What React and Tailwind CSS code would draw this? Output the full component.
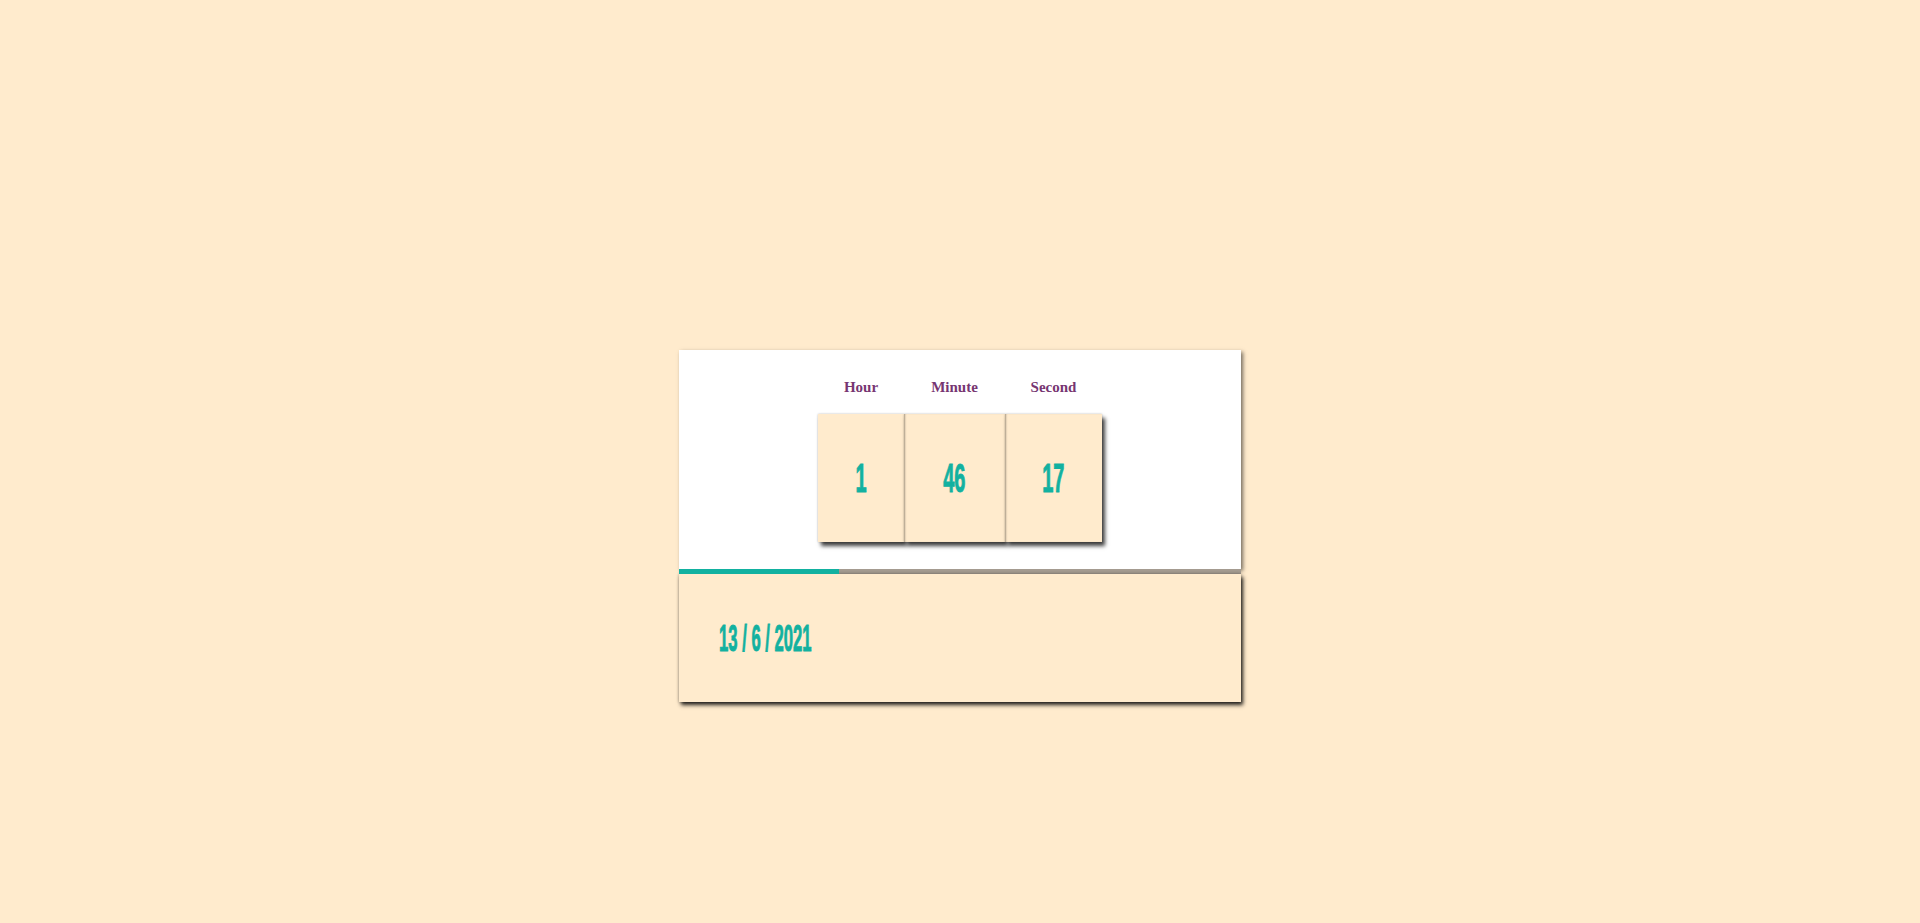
import React from "react";

const cols = [
  { label: "Hour", value: "1", w: "w-[86px]", first: true },
  { label: "Minute", value: "46", w: "w-[101px]" },
  { label: "Second", value: "17", w: "w-[97px]" },
];

export default function App() {
  return (
    <div className="min-h-[923px] w-full bg-[#ffebcd] pt-[350px]">
      <div className="mx-auto w-[562px]">
        <div className="flex justify-center bg-white pt-[29px] pb-[27px] shadow-[2px_2px_4px_rgba(0,0,0,0.55)]">
          <div className="flex">
            {cols.map((c) => (
              <div key={c.label} className="flex flex-col items-center">
                <div className="font-['Liberation_Serif',serif] text-[15px] font-bold leading-[17px] text-[#773672]">
                  {c.label}
                </div>
                <div
                  className={`mt-[18px] flex h-[128px] ${c.w} items-center justify-center bg-[#ffebcd] ${
                    c.first
                      ? "shadow-[0_0_2px_rgba(0,0,0,0.25),3px_4px_4px_rgba(0,0,0,0.75)]"
                      : "shadow-[inset_2px_0_2px_-1px_rgba(0,0,0,0.35),0_0_2px_rgba(0,0,0,0.25),3px_4px_4px_rgba(0,0,0,0.75)]"
                  }`}
                >
                  <span className="inline-block scale-x-[0.5] font-['Liberation_Sans',sans-serif] text-[40px] font-bold leading-none text-[#12b1a0] [-webkit-text-stroke:1px_#12b1a0]">
                    {c.value}
                  </span>
                </div>
              </div>
            ))}
          </div>
        </div>
        <div className="flex h-[5px] bg-[#a49b90]">
          <div className="w-[160px] bg-[#12b1a0]" />
        </div>
        <div className="flex h-[128px] items-center bg-[#ffebcd] pl-[40px] shadow-[0_0_3px_rgba(0,0,0,0.3),2px_3px_4px_rgba(0,0,0,0.85)]">
          <span className="inline-block origin-left scale-x-[0.45] whitespace-pre font-['Liberation_Sans',sans-serif] text-[37px] font-bold leading-none text-[#12b1a0] [-webkit-text-stroke:1px_#12b1a0]">
            13 / 6 / 2021
          </span>
        </div>
      </div>
    </div>
  );
}
